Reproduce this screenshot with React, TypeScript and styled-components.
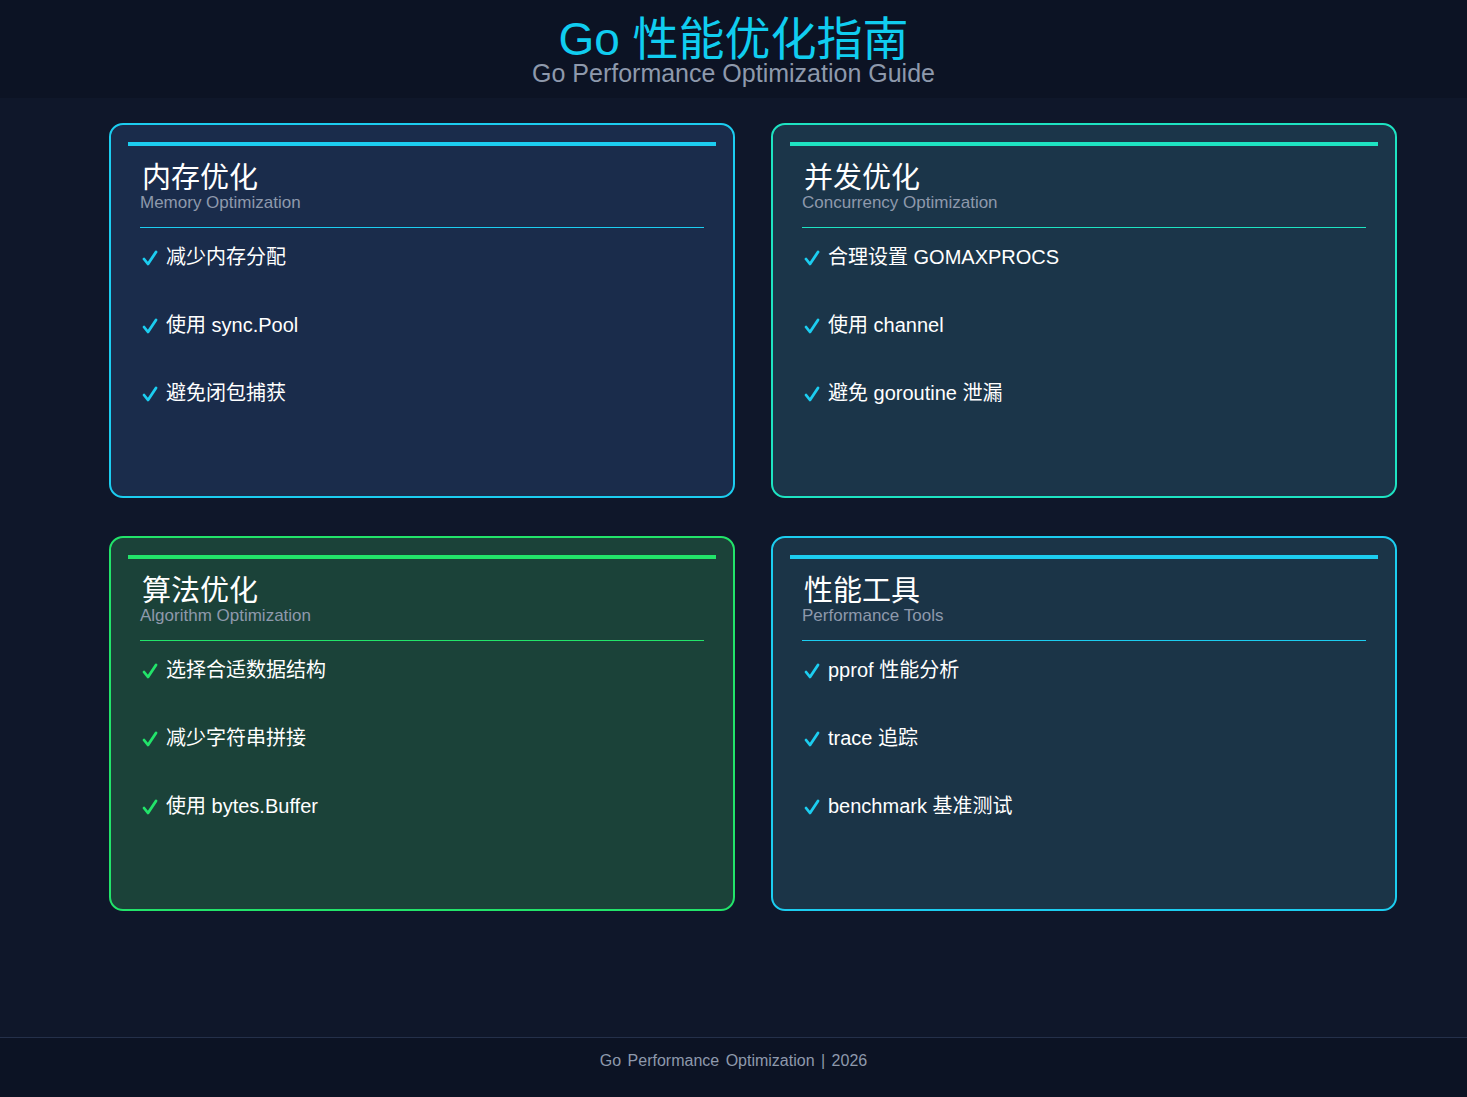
import styled, { createGlobalStyle } from "styled-components";

const Global = createGlobalStyle`
  body {
    margin: 0;
    background: #0f172a;
    font-family: "Liberation Sans", "Noto Sans CJK SC", sans-serif;
  }
`;

type Tone = { bg: string; accent: string };

const tones: Tone[] = [
  { bg: "#1a2c4b", accent: "#1ccdf0" },
  { bg: "#1b3549", accent: "#1ee3c2" },
  { bg: "#1b4239", accent: "#22e46a" },
  { bg: "#1b3447", accent: "#1ccdf0" },
];

const Page = styled.div`
  min-height: 1097px;
  display: flex;
  flex-direction: column;
`;

const Header = styled.header`
  height: 98px;
  background: #0c1324;
  display: flex;
  flex-direction: column;
  align-items: center;
  padding-top: 15px;
  box-sizing: border-box;
`;

const Title = styled.h1`
  margin: 0;
  font-size: 46px;
  line-height: 48px;
  font-weight: 400;
  color: #10cdf0;
`;

const Subtitle = styled.div`
  font-size: 25px;
  line-height: 26px;
  color: #8e99ac;
  margin-top: -3px;
`;

const Grid = styled.main`
  flex: 1;
  display: grid;
  grid-template-columns: 626px 626px;
  grid-auto-rows: 375px;
  column-gap: 36px;
  row-gap: 38px;
  padding: 25px 0 0 109px;
`;

const Card = styled.section<{ $tone: Tone }>`
  background: ${({ $tone }) => $tone.bg};
  border: 2px solid ${({ $tone }) => $tone.accent};
  border-radius: 14px;
  padding: 17px 17px 0;
  box-sizing: border-box;
`;

const Bar = styled.div<{ $c: string }>`
  height: 4px;
  background: ${({ $c }) => $c};
`;

const CardHead = styled.div<{ $c: string }>`
  margin: 0 12px;
  padding: 16px 0 15px;
  border-bottom: 1.5px solid ${({ $c }) => $c};
`;

const CardTitle = styled.h2`
  margin: 0 0 0 2px;
  font-size: 29px;
  line-height: 32px;
  font-weight: 400;
  color: #fff;
`;

const CardSub = styled.div`
  font-size: 17px;
  line-height: 18px;
  color: #8e99ac;
`;

const List = styled.ul`
  list-style: none;
  margin: 0;
  padding: 18px 14px 0;
  display: flex;
  flex-direction: column;
  gap: 45px;
`;

const Item = styled.li`
  display: flex;
  align-items: center;
  gap: 8px;
  font-size: 20px;
  line-height: 23px;
  color: #fff;
`;

const CheckIcon = ({ c }: { c: string }) => (
  <svg width="16" height="16" viewBox="0 0 16 16">
    <path d="M2 9 L6 14 L14 2" fill="none" stroke={c} strokeWidth="2.8" strokeLinecap="round" strokeLinejoin="round" />
  </svg>
);

const Footer = styled.footer`
  height: 60px;
  border-top: 1px solid #24304a;
  background: #0c1324;
  display: flex;
  justify-content: center;
  padding-top: 14px;
  box-sizing: border-box;
  font-size: 16px;
  color: #8e99ac;
  word-spacing: 2px;
`;

const cards = [
  { t: "内存优化", s: "Memory Optimization", items: ["减少内存分配", "使用 sync.Pool", "避免闭包捕获"] },
  { t: "并发优化", s: "Concurrency Optimization", items: ["合理设置 GOMAXPROCS", "使用 channel", "避免 goroutine 泄漏"] },
  { t: "算法优化", s: "Algorithm Optimization", items: ["选择合适数据结构", "减少字符串拼接", "使用 bytes.Buffer"] },
  { t: "性能工具", s: "Performance Tools", items: ["pprof 性能分析", "trace 追踪", "benchmark 基准测试"] },
];

export default function App() {
  return (
    <Page>
      <Global />
      <Header>
        <Title>Go 性能优化指南</Title>
        <Subtitle>Go Performance Optimization Guide</Subtitle>
      </Header>
      <Grid>
        {cards.map((c, i) => {
          const tone = tones[i];
          const check = i === 2 ? "#22e46a" : "#1ccdf0";
          return (
            <Card key={c.t} $tone={tone}>
              <Bar $c={tone.accent} />
              <CardHead $c={tone.accent}>
                <CardTitle>{c.t}</CardTitle>
                <CardSub>{c.s}</CardSub>
              </CardHead>
              <List>
                {c.items.map((it) => (
                  <Item key={it}>
                    <CheckIcon c={check} />
                    {it}
                  </Item>
                ))}
              </List>
            </Card>
          );
        })}
      </Grid>
      <Footer>Go Performance Optimization | 2026</Footer>
    </Page>
  );
}
